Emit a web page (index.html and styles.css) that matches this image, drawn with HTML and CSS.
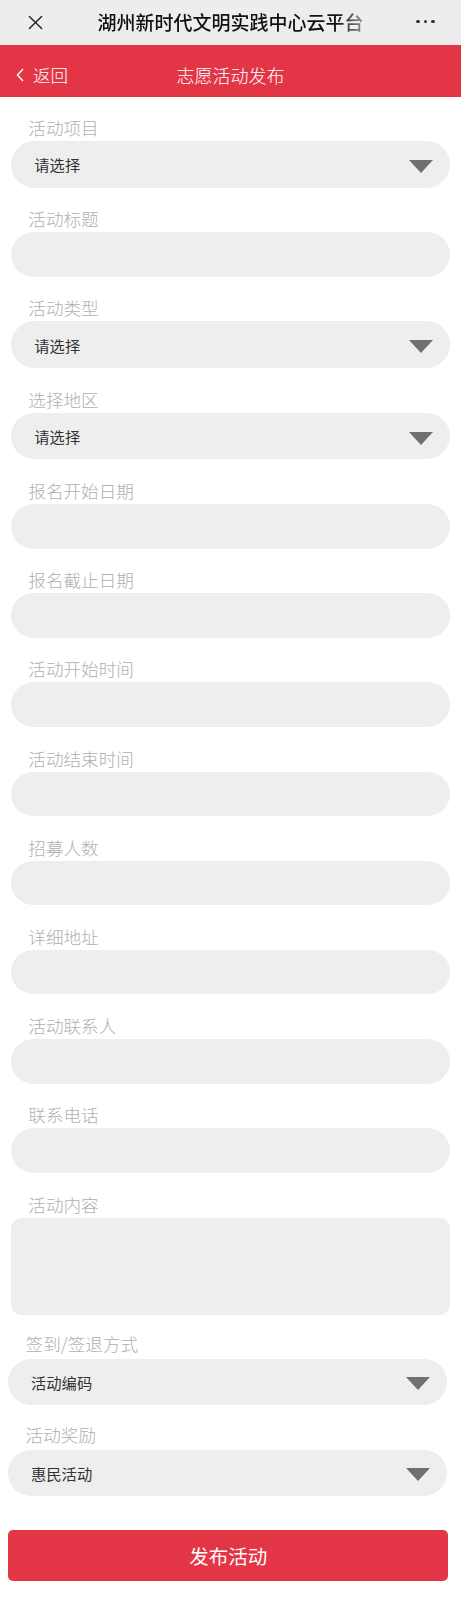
FILE: index.html
```html
<!DOCTYPE html>
<html lang="zh-CN">
<head>
<meta charset="utf-8">
<meta name="viewport" content="width=device-width, initial-scale=1">
<title>志愿活动发布</title>
<link rel="stylesheet" href="styles.css">
</head>
<body>
<header class="topbar">
  <svg class="close" viewBox="0 0 16 16" width="16" height="16" aria-hidden="true"><path d="M1.5 1.5 L14.5 14.5 M14.5 1.5 L1.5 14.5" stroke="#222" stroke-width="1.5" fill="none" stroke-linecap="round"/></svg>
  <div class="app-title"><span class="fade">湖州新时代文明实践中心云平台</span></div>
  <div class="dots"><i></i><i></i><i></i></div>
</header>
<nav class="navbar">
  <a class="back"><svg class="chev" viewBox="0 0 10 16" width="10" height="16" aria-hidden="true"><path d="M8 2 L2.5 8 L8 14" stroke="#fff" stroke-width="1.4" fill="none"/></svg><span>返回</span></a>
  <h1 class="page-title">志愿活动发布</h1>
  <span></span>
</nav>
<form class="form">
  <div class="group first">
    <div class="label">活动项目</div>
    <div class="select"><span>请选择</span><i class="caret"></i></div>
  </div>
  <div class="group">
    <div class="label">活动标题</div>
    <input class="input" type="text">
  </div>
  <div class="group">
    <div class="label">活动类型</div>
    <div class="select"><span>请选择</span><i class="caret"></i></div>
  </div>
  <div class="group">
    <div class="label">选择地区</div>
    <div class="select"><span>请选择</span><i class="caret"></i></div>
  </div>
  <div class="group">
    <div class="label">报名开始日期</div>
    <input class="input" type="text">
  </div>
  <div class="group">
    <div class="label">报名截止日期</div>
    <input class="input" type="text">
  </div>
  <div class="group">
    <div class="label">活动开始时间</div>
    <input class="input" type="text">
  </div>
  <div class="group">
    <div class="label">活动结束时间</div>
    <input class="input" type="text">
  </div>
  <div class="group">
    <div class="label">招募人数</div>
    <input class="input" type="text">
  </div>
  <div class="group">
    <div class="label">详细地址</div>
    <input class="input" type="text">
  </div>
  <div class="group">
    <div class="label">活动联系人</div>
    <input class="input" type="text">
  </div>
  <div class="group">
    <div class="label">联系电话</div>
    <input class="input" type="text">
  </div>
  <div class="group">
    <div class="label">活动内容</div>
    <textarea class="textarea"></textarea>
  </div>
  <div class="group shifted sign">
    <div class="label">签到/签退方式</div>
    <div class="select sel-small"><span>活动编码</span><i class="caret"></i></div>
  </div>
  <div class="group shifted reward">
    <div class="label">活动奖励</div>
    <div class="select sel-small"><span>惠民活动</span><i class="caret"></i></div>
  </div>
  <button class="submit" type="button">发布活动</button>
</form>
</body>
</html>
```

FILE: styles.css
```css
* { box-sizing: border-box; }
body {
  margin: 0;
  background: #fff;
  font-family: "Noto Sans CJK SC", "Noto Sans", sans-serif;
  color: #333;
}
.topbar {
  height: 45px;
  background: #ededed;
  display: grid;
  grid-template-columns: 71px 1fr 71px;
  align-items: center;
  padding-bottom: 2px;
}
.close { justify-self: center; width: 15px; height: 15px; margin-top: 2px; }
.app-title {
  text-align: center;
  font-size: 19px;
  font-weight: 500;
  color: #111;
  white-space: nowrap;
  line-height: 24px;
}
.fade {
  display: inline-block;
  -webkit-mask-image: linear-gradient(to right, #000 0, #000 90%, rgba(0,0,0,0.4) 100%);
  mask-image: linear-gradient(to right, #000 0, #000 90%, rgba(0,0,0,0.4) 100%);
}
.dots { justify-self: center; display: flex; gap: 4.2px; }
.dots i { width: 3.6px; height: 3.6px; border-radius: 50%; background: #333; display: block; }

.navbar {
  height: 52px;
  background: #e23647;
  display: grid;
  grid-template-columns: 1fr auto 1fr;
  align-items: center;
  padding-top: 7px;
  color: #fff;
}
.back {
  display: flex;
  align-items: center;
  padding-left: 15px;
  font-size: 17.5px;
  font-weight: 300;
  line-height: 24px;
  color: #fff;
}
.chev { width: 10px; height: 16px; margin-right: 8px; }
.page-title {
  margin: 0;
  font-size: 18px;
  font-weight: 300;
  line-height: 24px;
}

.form { padding: 0 11px 20px; }
.group { margin-top: 19.7px; }
.group.first { margin-top: 19px; }
.label {
  height: 24px;
  line-height: 24px;
  font-size: 17.6px;
  font-weight: 300;
  color: #b0b0b0;
  padding-left: 17.3px;
  margin-bottom: 1px;
  white-space: nowrap;
}
.select {
  height: 46.6px;
  background: #eeeeee;
  border-radius: 24px;
  display: flex;
  align-items: center;
  justify-content: space-between;
  padding: 0 17px 0 23.3px;
  font-size: 15.3px;
  color: #333;
}
.caret {
  width: 0;
  height: 0;
  border-left: 12px solid transparent;
  border-right: 12px solid transparent;
  border-top: 13px solid #6f6f6f;
  margin-top: 4px;
}
.input {
  display: block;
  width: 100%;
  height: 44.5px;
  border: 0;
  outline: none;
  background: #eeeeee;
  border-radius: 23px;
  padding: 0 23px;
  font: inherit;
  font-size: 15.3px;
  margin: 0;
}
.textarea {
  display: block;
  width: 100%;
  height: 97.4px;
  border: 0;
  outline: none;
  resize: none;
  background: #eeeeee;
  border-radius: 11px;
  padding: 12px 23px;
  font: inherit;
  font-size: 15.3px;
  margin: 0;
}
.shifted { margin-left: -2.7px; margin-right: 2.7px; }
.shifted .label { margin-bottom: 2.6px; }
.group.sign { margin-top: 17px; }
.group.reward { margin-top: 18.8px; }
.sel-small { height: 46px; padding-left: 22.7px; }

.submit {
  display: block;
  width: 440px;
  height: 51px;
  margin: 34px 0 0 -2.7px;
  border: 0;
  border-radius: 5px;
  background: #e23647;
  color: #fff;
  font-family: inherit;
  font-size: 19.5px;
  padding: 0;
}
```
